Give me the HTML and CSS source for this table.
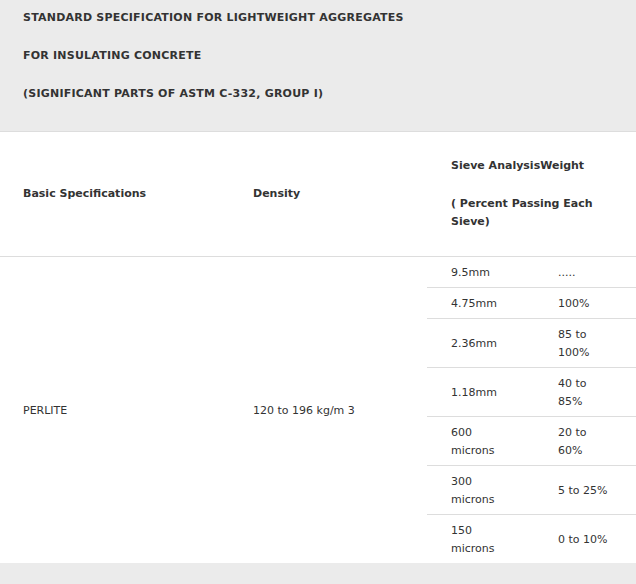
FILE: index.html
```html
<!DOCTYPE html>
<html>
<head>
<meta charset="utf-8">
<link rel="stylesheet" href="styles.css">
</head>
<body>
<div class="intro">
  <p class="title">STANDARD SPECIFICATION FOR LIGHTWEIGHT AGGREGATES</p>
  <p class="title">FOR INSULATING CONCRETE</p>
  <p class="title">(SIGNIFICANT PARTS OF ASTM C-332, GROUP I)</p>
</div>
<table class="spec">
  <colgroup><col class="c1"><col class="c2"><col class="c3"></colgroup>
  <tr class="head">
    <th>Basic Specifications</th>
    <th>Density</th>
    <th>
      <p>Sieve AnalysisWeight</p>
      <p class="sub">( Percent Passing Each Sieve)</p>
    </th>
  </tr>
  <tr class="data">
    <td>PERLITE</td>
    <td>120 to 196 kg/m 3</td>
    <td class="nest">
      <table class="sieve">
        <colgroup><col class="s1"><col class="s2"></colgroup>
        <tr><td>9.5mm</td><td>.....</td></tr>
        <tr><td>4.75mm</td><td>100%</td></tr>
        <tr><td>2.36mm</td><td>85 to 100%</td></tr>
        <tr><td>1.18mm</td><td>40 to 85%</td></tr>
        <tr><td>600 microns</td><td>20 to 60%</td></tr>
        <tr><td>300 microns</td><td>5 to 25%</td></tr>
        <tr><td>150 microns</td><td>0 to 10%</td></tr>
      </table>
    </td>
  </tr>
</table>
</body>
</html>
```
FILE: styles.css
```css
html, body {
  margin: 0;
  padding: 0;
  background: #ebebeb;
}
body {
  font-family: "DejaVu Sans", Verdana, sans-serif;
  font-size: 11px;
  line-height: 18px;
  color: #333333;
}
.intro {
  padding: 9px 23px 28px;
  display: flex;
  flex-direction: column;
  gap: 20px;
}
.title {
  margin: 0;
  font-weight: bold;
  letter-spacing: 0.22px;
}
.spec {
  width: 636px;
  border-collapse: collapse;
  table-layout: fixed;
  background: #ffffff;
  border-top: 1px solid #dddddd;
}
.c1 { width: 230px; }
.c2 { width: 197px; }
.c3 { width: 209px; }
.spec th {
  text-align: left;
  font-weight: bold;
  vertical-align: middle;
  padding: 25px 23px 25px;
  border-bottom: 1px solid #dddddd;
}
.spec th p { margin: 0; }
.spec th .sub { margin-top: 20px; }
.spec th:last-child { padding-left: 24px; }
.data td {
  padding: 1px 23px 0;
  vertical-align: middle;
}
.data td.nest { padding: 0; }
.sieve {
  width: 209px;
  border-collapse: collapse;
  table-layout: fixed;
}
.s1 { width: 108px; }
.s2 { width: 101px; }
.sieve td {
  padding: 7px 23px 5px 24px;
  border-bottom: 1px solid #dddddd;
  vertical-align: middle;
}
.sieve td:last-child { padding-left: 23px; }
.sieve tr:last-child td { border-bottom: none; }
```
